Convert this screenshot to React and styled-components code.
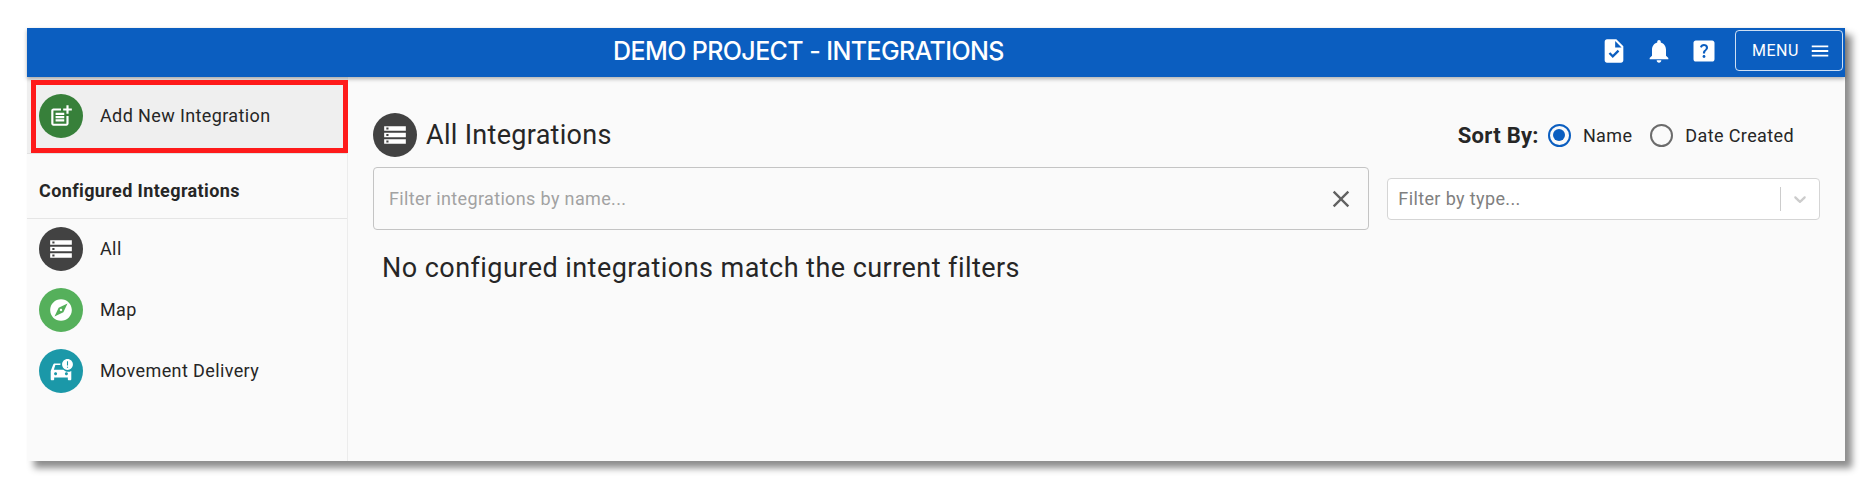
import React from 'react';
import styled, { createGlobalStyle } from 'styled-components';

const GlobalStyle = createGlobalStyle`
  html, body {
    margin: 0;
    padding: 0;
    background: #fff;
    font-family: Roboto, "Liberation Sans", sans-serif;
    letter-spacing: 0.38px;
    color: #262626;
  }
`;

const Page = styled.div`
  padding: 28px 27px 0;
  height: 504px;
  box-sizing: border-box;
`;

const Window = styled.div`
  position: relative;
  width: 1818px;
  height: 433px;
  display: flex;
  flex-direction: column;
  background: #fafafa;
  box-shadow: 7px 7px 7px rgba(0, 0, 0, 0.45);
`;

const Header = styled.header`
  flex: none;
  height: 49px;
  box-sizing: border-box;
  display: flex;
  align-items: center;
  background: #0b5ec0;
  box-shadow: 0 2px 4px rgba(0, 0, 0, 0.3);
  color: #fff;
  padding: 0 2px 4px 586px;
  position: relative;
`;

const Title = styled.h1`
  flex: 1;
  margin: 0;
  font-family: Inter, Roboto, sans-serif;
  font-size: 25px;
  line-height: 30px;
  font-weight: 500;
  letter-spacing: -0.6px;
`;

const HeaderIcons = styled.div`
  display: flex;
  align-items: center;
  gap: 17px;
  margin-right: 17px;
`;

const HeaderIcon = styled.svg`
  width: 28px;
  height: 28px;
  fill: #fff;
  display: block;
`;

const MenuButton = styled.button`
  width: 108px;
  height: 41px;
  box-sizing: border-box;
  display: flex;
  align-items: center;
  justify-content: flex-start;
  gap: 10px;
  background: transparent;
  border: 1px solid rgba(255, 255, 255, 0.8);
  border-radius: 4px;
  color: #fff;
  font: 400 16px Roboto, sans-serif;
  letter-spacing: 0.5px;
  padding: 0 0 0 16px;
`;

const Body = styled.div`
  flex: 1;
  display: flex;
  min-height: 0;
`;

const Sidebar = styled.aside`
  flex: none;
  width: 320px;
  box-sizing: content-box;
  border-right: 1px solid #ececec;
  display: flex;
  flex-direction: column;
`;

const AddRow = styled.div`
  height: 77px;
  padding: 1px 0 0 12px;
  box-sizing: border-box;
  display: flex;
  align-items: center;
  gap: 17px;
  background: #efefef;
  border-bottom: 1px solid #e2e2e2;
  font-size: 18px;
`;

const SectionTitle = styled.div`
  height: 65px;
  box-sizing: border-box;
  padding: 9px 0 0 12px;
  display: flex;
  align-items: center;
  font-size: 18px;
  font-weight: 700;
  border-bottom: 1px solid #e5e5e5;
`;

const NavList = styled.div`
  display: flex;
  flex-direction: column;
  gap: 17px;
  padding: 8px 0 0 12px;
`;

const NavRow = styled.div`
  display: flex;
  align-items: center;
  gap: 17px;
  font-size: 18px;
`;

const NavLabel = styled.span`
  margin-top: -2px;
`;

const Badge = styled.div`
  flex: none;
  width: 44px;
  height: 44px;
  border-radius: 50%;
  background: ${(p) => p.$color};
  display: flex;
  align-items: center;
  justify-content: center;
`;

const BadgeIcon = styled.svg`
  width: 26px;
  height: 26px;
  fill: #fff;
  display: block;
`;

const Main = styled.main`
  flex: 1;
  min-width: 0;
  padding: 36px 25px 0;
`;

const TitleRow = styled.div`
  display: flex;
  align-items: center;
  height: 44px;
`;

const MainTitle = styled.h2`
  flex: 1;
  margin: 0 0 0 9px;
  font-size: 27px;
  font-weight: 400;
  letter-spacing: 0.3px;
`;

const SortGroup = styled.div`
  display: flex;
  align-items: center;
  margin-right: 26px;
  font-size: 18px;
`;

const SortLabel = styled.span`
  font-size: 22px;
  font-weight: 700;
  letter-spacing: 0.3px;
  margin-right: 9px;
`;

const RadioMark = styled.span`
  flex: none;
  width: 23px;
  height: 23px;
  box-sizing: border-box;
  border-radius: 50%;
  border: 2px solid ${(p) => (p.$on ? '#0b5ec0' : '#6b6b6b')};
  display: flex;
  align-items: center;
  justify-content: center;
  margin-right: 12px;

  &::after {
    content: '';
    display: ${(p) => (p.$on ? 'block' : 'none')};
    width: 12px;
    height: 12px;
    border-radius: 50%;
    background: #0b5ec0;
  }
`;

const RadioLabel = styled.span`
  margin-right: 18px;

  &:last-child {
    margin-right: 0;
  }
`;

const FilterRow = styled.div`
  display: flex;
  align-items: center;
  gap: 18px;
  margin-top: 10px;
`;

const NameFilter = styled.div`
  width: 997px;
  height: 63px;
  box-sizing: border-box;
  display: flex;
  align-items: center;
  justify-content: space-between;
  padding: 0 13px 0 15px;
  border: 1px solid #c4c4c4;
  border-radius: 4px;
  color: #a2a2a2;
  font-size: 18px;
  letter-spacing: 0.36px;
`;

const TypeFilter = styled.div`
  width: 433px;
  height: 42px;
  box-sizing: border-box;
  display: flex;
  align-items: center;
  background: #fff;
  border: 1px solid #d5d5d5;
  border-radius: 4px;
  padding-left: 10px;
  color: #808080;
  font-size: 18px;
`;

const TypeText = styled.span`
  flex: 1;
`;

const Separator = styled.span`
  width: 1px;
  height: 24px;
  background: #ccc;
`;

const Chevron = styled.svg`
  width: 20px;
  height: 20px;
  margin: 0 9px;
  fill: #ccc;
`;

const EmptyMessage = styled.p`
  margin: 20px 0 0 9px;
  font-size: 27px;
  line-height: 36px;
  letter-spacing: 0.45px;
`;

// annotation drawn on top of the screenshot
const Highlight = styled.div`
  position: absolute;
  left: 4px;
  top: 52px;
  width: 317px;
  height: 73px;
  box-sizing: border-box;
  border: 5px solid #fe1a1a;
`;

const STORAGE = 'M2 20h20v-4H2v4zm2-3h2v2H4v-2zM2 4v4h20V4H2zm4 3H4V5h2v2zm-4 7h20v-4H2v4zm2-3h2v2H4v-2z';
const EXPLORE = 'M12 10.9c-.61 0-1.1.49-1.1 1.1s.49 1.1 1.1 1.1c.61 0 1.1-.49 1.1-1.1s-.49-1.1-1.1-1.1zM12 2C6.48 2 2 6.48 2 12s4.48 10 10 10 10-4.48 10-10S17.52 2 12 2zm2.19 12.19L6 18l3.81-8.19L18 6l-3.81 8.19z';
const POST_ADD = 'M17 19.22H5V7h7V5H5c-1.1 0-2 .9-2 2v12c0 1.1.9 2 2 2h12c1.1 0 2-.9 2-2v-7h-2v7.22zM19 2h-2v3h-3c.01.01 0 2 0 2h3v2.99c.01.01 2 0 2 0V7h3V5h-3V2zM7 9h8v2H7zM7 12v2h8v-2h-3zM7 15h8v2H7z';
const CAR_ALERT = 'M18 1c-2.76 0-5 2.24-5 5s2.24 5 5 5 5-2.24 5-5-2.24-5-5-5zm.5 8h-1V8h1v1zm0-2h-1V3h1v4zM11.6 5H6.2C5.5 5 5 5.4 4.8 6L2.5 12v7.5c0 .55.45 1 1 1h1.2c.55 0 1-.45 1-1V18h12.6v1.5c0 .55.45 1 1 1h1.2c.55 0 1-.45 1-1v-7.6c-.9.5-1.9.8-3 .8-1.7 0-3.2-.7-4.3-1.9H5.4l1.4-4.3h4.6c0-.5.1-1 .2-1.5zM7 16c-.8 0-1.4-.6-1.4-1.4S6.2 13.2 7 13.2s1.4.6 1.4 1.4S7.8 16 7 16zm10 0c-.8 0-1.4-.6-1.4-1.4s.6-1.4 1.4-1.4 1.4.6 1.4 1.4S17.8 16 17 16z';
const TASK = 'M14 2H6c-1.1 0-1.99.9-1.99 2L4 20c0 1.1.89 2 1.99 2H18c1.1 0 2-.9 2-2V8l-6-6zm-3.06 16L7.4 14.46l1.41-1.41 2.12 2.12 4.24-4.24 1.41 1.41L10.94 18zM13 9V3.5L18.5 9H13z';
const BELL = 'M12 22c1.1 0 2-.9 2-2h-4c0 1.1.89 2 2 2zm6-6v-5c0-3.07-1.64-5.64-4.5-6.32V4c0-.83-.67-1.5-1.5-1.5s-1.5.67-1.5 1.5v.68C7.63 5.36 6 7.92 6 11v5l-2 2v1h16v-1l-2-2z';
const HELP = 'M19 3H5c-1.1 0-2 .9-2 2v14c0 1.1.9 2 2 2h14c1.1 0 2-.9 2-2V5c0-1.1-.9-2-2-2zm-6.99 15c-.7 0-1.26-.56-1.26-1.26 0-.71.56-1.25 1.26-1.25.71 0 1.25.54 1.25 1.25-.01.69-.54 1.26-1.25 1.26zm3.01-7.4c-.76 1.11-1.48 1.46-1.87 2.17-.16.29-.22.48-.22 1.41h-1.82c0-.49-.08-1.29.31-1.98.49-.87 1.42-1.39 1.96-2.16.57-.81.25-2.33-1.37-2.33-1.06 0-1.58.8-1.8 1.48l-1.65-.7C9.01 7.15 10.22 6 11.99 6c1.48 0 2.49.67 3.01 1.52.44.72.7 2.07.03 3.08z';

const integrations = [
  { name: 'All', color: '#424242', icon: STORAGE },
  { name: 'Map', color: '#55b05b', icon: EXPLORE },
  { name: 'Movement Delivery', color: '#1b98a8', icon: CAR_ALERT },
];

const IconBadge = ({ color, icon }) => (
  <Badge $color={color}>
    <BadgeIcon viewBox="0 0 24 24">
      <path d={icon} />
    </BadgeIcon>
  </Badge>
);

export default function App() {
  return (
    <Page>
      <GlobalStyle />
      <Window>
        <Header>
          <Title>DEMO PROJECT - INTEGRATIONS</Title>
          <HeaderIcons>
            {[TASK, BELL, HELP].map((d) => (
              <HeaderIcon key={d} viewBox="0 0 24 24">
                <path d={d} />
              </HeaderIcon>
            ))}
          </HeaderIcons>
          <MenuButton>
            MENU
            <svg width="22" height="22" viewBox="0 0 24 24" fill="#fff">
              <path d="M3 18h18v-2H3v2zm0-5h18v-2H3v2zm0-7v2h18V6H3z" />
            </svg>
          </MenuButton>
        </Header>
        <Body>
          <Sidebar>
            <AddRow>
              <IconBadge color="#37803a" icon={POST_ADD} />
              Add New Integration
            </AddRow>
            <SectionTitle>Configured Integrations</SectionTitle>
            <NavList>
              {integrations.map((item) => (
                <NavRow key={item.name}>
                  <IconBadge color={item.color} icon={item.icon} />
                  <NavLabel>{item.name}</NavLabel>
                </NavRow>
              ))}
            </NavList>
          </Sidebar>
          <Main>
            <TitleRow>
              <IconBadge color="#424242" icon={STORAGE} />
              <MainTitle>All Integrations</MainTitle>
              <SortGroup>
                <SortLabel>Sort By:</SortLabel>
                <RadioMark $on />
                <RadioLabel>Name</RadioLabel>
                <RadioMark />
                <RadioLabel>Date Created</RadioLabel>
              </SortGroup>
            </TitleRow>
            <FilterRow>
              <NameFilter>
                Filter integrations by name...
                <svg width="28" height="28" viewBox="0 0 24 24" fill="#616161">
                  <path d="M19 6.41 17.59 5 12 10.59 6.41 5 5 6.41 10.59 12 5 17.59 6.41 19 12 13.41 17.59 19 19 17.59 13.41 12z" />
                </svg>
              </NameFilter>
              <TypeFilter>
                <TypeText>Filter by type...</TypeText>
                <Separator />
                <Chevron viewBox="0 0 20 20">
                  <path d="M4.516 7.548c.436-.446 1.043-.481 1.576 0L10 11.295l3.908-3.747c.533-.481 1.141-.446 1.574 0 .436.445.408 1.197 0 1.615-.406.418-4.695 4.502-4.695 4.502a1.095 1.095 0 0 1-1.576 0S4.924 9.581 4.516 9.163c-.409-.418-.436-1.17 0-1.615z" />
                </Chevron>
              </TypeFilter>
            </FilterRow>
            <EmptyMessage>No configured integrations match the current filters</EmptyMessage>
          </Main>
        </Body>
        <Highlight />
      </Window>
    </Page>
  );
}
